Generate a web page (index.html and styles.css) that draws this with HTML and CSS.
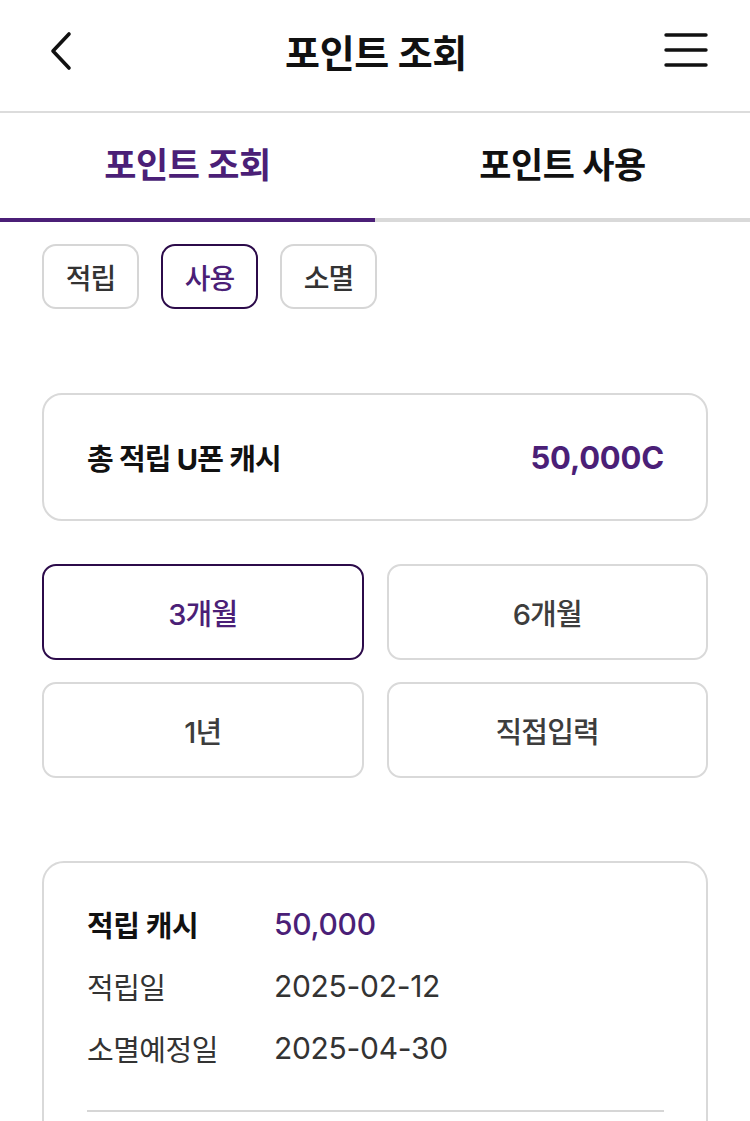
FILE: index.html
```html
<!DOCTYPE html>
<html lang="ko">
<head>
<meta charset="utf-8">
<link rel="stylesheet" href="styles.css">
</head>
<body>
<div class="page">
  <header class="topbar">
    <svg class="back" width="44" height="40" viewBox="0 0 44 40"><path d="M25 3 L9 20 L25 37" fill="none" stroke="#111" stroke-width="3.6" stroke-linecap="round" stroke-linejoin="round"/></svg>
    <h1 class="title">포인트 조회</h1>
    <svg class="menu" width="44" height="36" viewBox="0 0 44 36"><g stroke="#111" stroke-width="3.4" stroke-linecap="round"><line x1="2" y1="3" x2="42" y2="3"/><line x1="2" y1="18" x2="42" y2="18"/><line x1="2" y1="33" x2="42" y2="33"/></g></svg>
  </header>
  <nav class="tabs">
    <div class="tab active">포인트 조회</div>
    <div class="tab">포인트 사용</div>
  </nav>
  <div class="chips">
    <div class="chip">적립</div>
    <div class="chip on">사용</div>
    <div class="chip">소멸</div>
  </div>
  <section class="summary">
    <span class="sum-label">총 적립 U폰 캐시</span>
    <span class="sum-value">50,000C</span>
  </section>
  <div class="periods">
    <div class="period on">3개월</div>
    <div class="period">6개월</div>
    <div class="period">1년</div>
    <div class="period">직접입력</div>
  </div>
  <section class="detail">
    <div class="row head"><span class="k">적립 캐시</span><span class="v">50,000</span></div>
    <div class="row"><span class="k">적립일</span><span class="v">2025-02-12</span></div>
    <div class="row"><span class="k">소멸예정일</span><span class="v">2025-04-30</span></div>
    <div class="divider"></div>
  </section>
</div>
</body>
</html>
```
FILE: styles.css
```css
* { box-sizing: border-box; margin: 0; padding: 0; }
html, body { background: #fff; }
body {
  font-family: "Inter", "Noto Sans CJK KR", "Noto Sans", sans-serif;
  color: #111;
  width: 750px;
  height: 1121px;
  overflow: hidden;
}
.page { width: 750px; }
.topbar {
  height: 113px;
  border-bottom: 2px solid #dcdcdc;
  display: flex;
  align-items: center;
  padding: 0 42px 10px 44px;
}
.title {
  flex: 1;
  text-align: center;
  font-size: 38px;
  font-weight: 700;
  letter-spacing: -0.3px;
  color: #111;
}
.menu { margin-top: -2px; }
.tabs {
  display: flex;
  height: 109px;
}
.tab {
  flex: 1;
  display: flex;
  align-items: center;
  justify-content: center;
  font-size: 35px;
  font-weight: 700;
  letter-spacing: -0.5px;
  border-bottom: 4px solid #d9d9d9;
  padding-bottom: 6px;
  color: #111;
}
.tab.active { color: #4b1f77; border-bottom-color: #4b1f77; }
.chips {
  display: flex;
  gap: 22px;
  padding: 22px 42px 0;
}
.chip {
  width: 97px;
  height: 65px;
  border: 2px solid #d6d6d6;
  border-radius: 14px;
  display: flex;
  align-items: center;
  justify-content: center;
  font-size: 28px;
  font-weight: 500;
  color: #333;
  letter-spacing: -1px;
}
.chip.on { border-color: #2c0b4a; color: #4b1f77; }
.summary {
  margin: 84px 42px 0;
  height: 128px;
  border: 2px solid #d9d9d9;
  border-radius: 20px;
  display: flex;
  align-items: center;
  justify-content: space-between;
  padding: 0 42px 0 43px;
}
.sum-label { font-size: 29px; font-weight: 700; letter-spacing: -0.8px; }
.sum-value { font-size: 31px; font-weight: 700; color: #4b1f77; letter-spacing: -0.2px; }
.periods {
  margin: 43px 42px 0;
  display: grid;
  grid-template-columns: 1fr 1fr;
  gap: 22px 23px;
}
.period {
  height: 96px;
  border: 2px solid #d9d9d9;
  border-radius: 14px;
  display: flex;
  align-items: center;
  justify-content: center;
  font-size: 29px;
  font-weight: 500;
  color: #3d3d3d;
  letter-spacing: -0.8px;
}
.period.on { border-color: #2c0b4a; color: #4b1f77; }
.detail {
  margin: 83px 42px 0;
  border: 2px solid #d9d9d9;
  border-radius: 22px;
  padding: 30px 42px 0 43px;
  height: 300px;
}
.row {
  display: flex;
  align-items: center;
  height: 62px;
  font-size: 29px;
  letter-spacing: -0.5px;
  color: #333;
}
.row .k { width: 187px; }
.row .v { font-weight: 400; font-size: 30px; letter-spacing: -0.3px; }
.row.head { font-weight: 700; color: #111; }
.row.head .v { color: #4b1f77; font-weight: 500; }
.divider {
  margin-top: 31px;
  height: 2px;
  background: #d6d6d6;
}
```
